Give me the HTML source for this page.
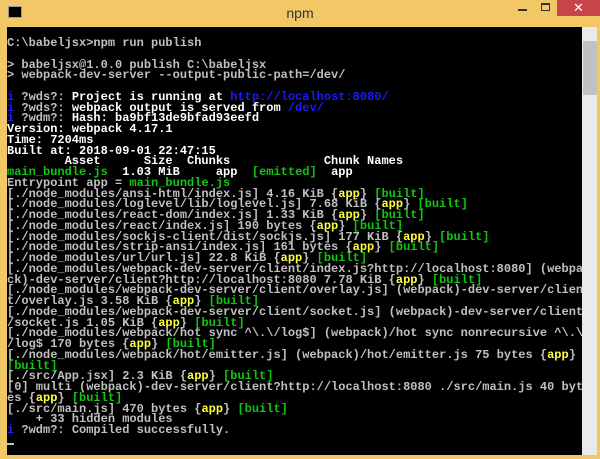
<!DOCTYPE html><html><head><style>
body{margin:0;width:600px;height:459px;overflow:hidden;background:#f2c766;position:relative;font-family:"Liberation Sans",sans-serif}
.title{position:absolute;left:0;top:5px;width:600px;text-align:center;font-size:14px;color:#333}
.ic{position:absolute;left:8px;top:6px;width:12px;height:10px;background:#000;border:1px solid #999}
.cl{position:absolute;left:557px;top:0;width:43px;height:16px;background:#c7444a;color:#fff;text-align:center;font-size:13px;line-height:16px}
.mn{position:absolute;left:518px;top:9px;width:9px;height:2px;background:#333}
.mx{position:absolute;left:541px;top:3px;width:7px;height:5px;border:1px solid #333;border-top-width:2px}
.con{position:absolute;left:7px;top:27px;width:575px;height:428px;background:#000;overflow:hidden}
.sb{position:absolute;left:582px;top:27px;width:15px;height:428px;background:#eaeaea}
.th{position:absolute;left:583px;top:41px;width:14px;height:54px;background:#c1c1c1}
.cur{position:absolute;left:0;top:416px;width:7px;height:2px;background:#c0c0c0}
pre{position:absolute;left:0;top:11px;margin:0;font-family:"Liberation Mono",monospace;font-size:12px;line-height:10.75px;color:#c0c0c0;font-weight:bold;white-space:pre}
.w{color:#fff}.g{color:#13c413}.y{color:#ffff40}.b{color:#1a1aff}
</style></head><body>
<div class="ic"></div><div class="title">npm</div><div class="mn"></div><div class="mx"></div><div class="cl">✕</div>
<div class="con"><pre>C:\babeljsx&gt;npm run publish

&gt; babeljsx@1.0.0 publish C:\babeljsx
&gt; webpack-dev-server --output-public-path=/dev/

<span class="b">i</span> ?wds?: <span class="w">Project is running at</span> <span class="b">http://localhost:8080/</span>
<span class="b">i</span> ?wds?: <span class="w">webpack output is served from</span> <span class="b">/dev/</span>
<span class="b">i</span> ?wdm?: <span class="w">Hash: ba9bf13de9bfad93eefd</span>
<span class="w">Version: webpack 4.17.1
Time: 7204ms
Built at: 2018-09-01 22:47:15
        Asset      Size  Chunks             Chunk Names</span>
<span class="g">main_bundle.js</span>  <span class="w">1.03 MiB</span>     <span class="w">app</span>  <span class="g">[emitted]</span>  <span class="w">app</span>
Entrypoint app = <span class="g">main_bundle.js</span>
[./node_modules/ansi-html/index.js] 4.16 KiB {<span class="y">app</span>} <span class="g">[built]</span>
[./node_modules/loglevel/lib/loglevel.js] 7.68 KiB {<span class="y">app</span>} <span class="g">[built]</span>
[./node_modules/react-dom/index.js] 1.33 KiB {<span class="y">app</span>} <span class="g">[built]</span>
[./node_modules/react/index.js] 190 bytes {<span class="y">app</span>} <span class="g">[built]</span>
[./node_modules/sockjs-client/dist/sockjs.js] 177 KiB {<span class="y">app</span>} <span class="g">[built]</span>
[./node_modules/strip-ansi/index.js] 161 bytes {<span class="y">app</span>} <span class="g">[built]</span>
[./node_modules/url/url.js] 22.8 KiB {<span class="y">app</span>} <span class="g">[built]</span>
[./node_modules/webpack-dev-server/client/index.js?http://localhost:8080] (webpa
ck)-dev-server/client?http://localhost:8080 7.78 KiB {<span class="y">app</span>} <span class="g">[built]</span>
[./node_modules/webpack-dev-server/client/overlay.js] (webpack)-dev-server/clien
t/overlay.js 3.58 KiB {<span class="y">app</span>} <span class="g">[built]</span>
[./node_modules/webpack-dev-server/client/socket.js] (webpack)-dev-server/client
/socket.js 1.05 KiB {<span class="y">app</span>} <span class="g">[built]</span>
[./node_modules/webpack/hot sync ^\.\/log$] (webpack)/hot sync nonrecursive ^\.\
/log$ 170 bytes {<span class="y">app</span>} <span class="g">[built]</span>
[./node_modules/webpack/hot/emitter.js] (webpack)/hot/emitter.js 75 bytes {<span class="y">app</span>}
<span class="g">[built]</span>
[./src/App.jsx] 2.3 KiB {<span class="y">app</span>} <span class="g">[built]</span>
[0] multi (webpack)-dev-server/client?http://localhost:8080 ./src/main.js 40 byt
es {<span class="y">app</span>} <span class="g">[built]</span>
[./src/main.js] 470 bytes {<span class="y">app</span>} <span class="g">[built]</span>
    + 33 hidden modules
<span class="b">i</span> ?wdm?: Compiled successfully.</pre><div class="cur"></div></div>
<div class="sb"></div><div class="th"></div>
</body></html>
